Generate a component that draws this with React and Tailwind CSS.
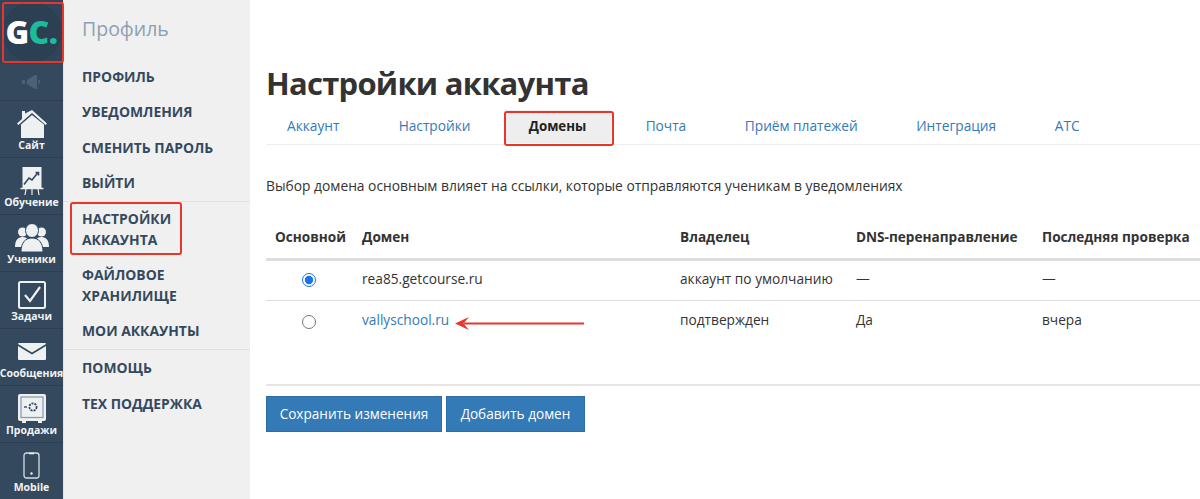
import React from "react";

function Rail({ label, children }) {
  return (
    <div className="h-[57px] border-t border-[#2c3e50] flex flex-col items-center justify-start pt-[6px]">
      <div className="h-[33px] flex items-center justify-center">{children}</div>
      <div className="text-[10.5px] leading-[11px] font-bold text-[#f0f3f4] whitespace-nowrap">{label}</div>
    </div>
  );
}

function Menu({ children }) {
  return <a className="block text-[13.9px] leading-[21px] font-bold text-[#34495e]">{children}</a>;
}

function Tab({ children, cls = "px-[29.3px]" }) {
  return <a className={"h-[33px] flex items-center text-[13.7px] text-[#337ab7] whitespace-nowrap " + cls}>{children}</a>;
}

export default function App() {
  return (
    <div className="flex h-[499px] w-[1200px] overflow-hidden bg-white relative font-['Open_Sans','Noto_Sans',sans-serif]">
      {/* rail */}
      <div className="w-[63px] shrink-0 bg-[#34495e] flex flex-col">
        <div className="h-[64px] bg-[#31455a] flex items-center justify-center">
          <div className="w-[60px] h-[60px] shrink-0 rounded-full bg-[#2d3f52] flex items-center justify-center text-[32px] font-extrabold leading-none tracking-[-0.5px]">
            <span className="text-white">G</span>
            <span className="text-[#1abc9c]">C.</span>
          </div>
        </div>
        <div className="h-[36px] flex items-center justify-center pr-[1px]">
          <svg width="20" height="14" viewBox="0 0 20 14" fill="#4c6076">
            <rect x="1" y="5" width="3" height="4" />
            <path d="M6 5 L14 0 H16 V14 H14 L6 9 Z" />
            <rect x="17.5" y="5" width="1.5" height="4" />
          </svg>
        </div>
        <Rail label="Сайт">
          <svg width="30" height="28" viewBox="0 0 30 28" fill="#edf1f2">
            <path d="M5 1 H8 V3.5 L15 0 L30 13.5 L28.6 15 L15 3 L1.4 15 L0 13.5 L5 9 Z" />
            <path d="M4 14.5 L15 5 L27 14.5 V28 H4 Z" />
          </svg>
        </Rail>
        <Rail label="Обучение">
          <svg width="24" height="28" viewBox="0 0 24 28" fill="none">
            <rect x="2.5" y="0" width="19" height="21" fill="#edf1f2" />
            <path d="M4 17.5 L9 11 L12 13 L18 5.5 M15.5 5.5 H18.5 V8.5" stroke="#34495e" strokeWidth="1.6" />
            <path d="M0.5 21.5 H23.5" stroke="#edf1f2" strokeWidth="1.5" />
            <path d="M6 22 L5 28 M12 22 V28 M18 22 L19 28" stroke="#edf1f2" strokeWidth="1.2" />
          </svg>
        </Rail>
        <Rail label="Ученики">
          <svg width="34" height="28" viewBox="0 0 34 28" fill="#edf1f2">
            <circle cx="7.5" cy="8" r="4.5" />
            <circle cx="26.5" cy="8" r="4.5" />
            <path d="M0 23 C0 15 4 13 8 13 C12 13 14 16 14 23 Z" />
            <path d="M20 23 C20 16 22 13 26 13 C30 13 34 15 34 23 Z" />
            <ellipse cx="17" cy="6.5" rx="6.5" ry="7" stroke="#34495e" strokeWidth="1" />
            <path d="M6 28 C6 18 11 14 17 14 C23 14 28 18 28 28 Z" stroke="#34495e" strokeWidth="1" />
          </svg>
        </Rail>
        <Rail label="Задачи">
          <svg width="28" height="28" viewBox="0 0 28 28" fill="none">
            <rect x="1" y="1" width="26" height="26" rx="1.5" stroke="#edf1f2" strokeWidth="2" />
            <path d="M7 14 L12 20 L22 6" stroke="#edf1f2" strokeWidth="2.2" />
          </svg>
        </Rail>
        <Rail label="Сообщения">
          <svg width="28" height="17" viewBox="0 0 28 17">
            <path d="M0 1 Q0 0 1 0 H27 Q28 0 28 1 L14 9.5 Z" fill="#edf1f2" />
            <path d="M0 3 L14 11.5 L28 3 V16 Q28 17 27 17 H1 Q0 17 0 16 Z" fill="#edf1f2" />
          </svg>
        </Rail>
        <Rail label="Продажи">
          <svg width="28" height="29" viewBox="0 0 28 29" fill="none">
            <rect x="0" y="0" width="28" height="27" rx="2" fill="#edf1f2" />
            <rect x="3" y="3" width="22" height="20.5" stroke="#8597a6" strokeWidth="1.2" />
            <circle cx="15" cy="13" r="3.6" stroke="#34495e" strokeWidth="1.8" strokeDasharray="2 1" />
            <path d="M6 13 H9" stroke="#34495e" strokeWidth="1.4" />
            <path d="M4 27 V29 H8 V27 M20 27 V29 H24 V27" fill="#edf1f2" />
          </svg>
        </Rail>
        <Rail label="Mobile">
          <svg width="17" height="27" viewBox="0 0 17 27" fill="none">
            <rect x="1" y="1" width="15" height="25" rx="2.5" stroke="#d5dce0" strokeWidth="1.3" />
            <path d="M6 1.5 H11" stroke="#edf1f2" strokeWidth="1.5" />
            <circle cx="8.5" cy="21.5" r="1.2" fill="#edf1f2" />
          </svg>
        </Rail>
      </div>

      {/* sidebar */}
      <div className="w-[187px] shrink-0 bg-[#f0f0f0] flex flex-col border-l border-[#e4e4e4]">
        <div className="pl-[18px] pt-[15px] h-[66px] text-[19.5px] leading-[28px] text-[#8ea0b0]">Профиль</div>
        <div className="flex flex-col">
          <div className="pl-[18px] flex flex-col gap-[14.3px] pb-[8px]">
            <Menu>ПРОФИЛЬ</Menu>
            <Menu>УВЕДОМЛЕНИЯ</Menu>
            <Menu>СМЕНИТЬ ПАРОЛЬ</Menu>
            <Menu>ВЫЙТИ</Menu>
          </div>
          <div className="border-t border-[#e3e3e3] pl-[18px] pt-[6px] pb-[8px] flex flex-col gap-[14.3px]">
            <Menu>НАСТРОЙКИ<br />АККАУНТА</Menu>
            <Menu>ФАЙЛОВОЕ<br />ХРАНИЛИЩЕ</Menu>
            <Menu>МОИ АККАУНТЫ</Menu>
          </div>
          <div className="border-t border-[#e0e0e0] pl-[18px] pt-[7px] flex flex-col gap-[14.3px]">
            <Menu>ПОМОЩЬ</Menu>
            <Menu>ТЕХ ПОДДЕРЖКА</Menu>
          </div>
        </div>
      </div>

      {/* main */}
      <div className="flex-1 pl-[16px] min-w-0">
        <h1 className="pt-[62px] text-[31px] leading-[42px] font-bold tracking-[-0.75px] text-[#333]">Настройки аккаунта</h1>
        <div className="mt-[6px] h-[35px] border-b border-[#eee] flex items-start">
          <Tab cls="pl-[21px] pr-[30px]">Аккаунт</Tab>
          <Tab>Настройки</Tab>
          <div className="ml-[4px] mr-[5px] px-[25px] h-[33px] flex items-center bg-[#eee] text-[13.3px] font-bold text-[#222]">Домены</div>
          <Tab>Почта</Tab>
          <Tab>Приём платежей</Tab>
          <Tab>Интеграция</Tab>
          <Tab>АТС</Tab>
        </div>
        <p className="mt-[31px] text-[13.8px] leading-[20px] text-[#333]">Выбор домена основным влияет на ссылки, которые отправляются ученикам в уведомлениях</p>

        <table className="mt-[20px] table-fixed w-[934px] text-[13.7px] text-[#333] border-collapse">
          <thead>
            <tr className="h-[43px] border-b-[3px] border-[#ddd] text-left text-[13.6px]">
              <th className="w-[88px] pl-[9px] font-bold">Основной</th>
              <th className="w-[318px] pl-[8px] font-bold">Домен</th>
              <th className="w-[176px] pl-[8px] font-bold">Владелец</th>
              <th className="w-[186px] pl-[8px] font-bold">DNS-перенаправление</th>
              <th className="pl-[8px] font-bold">Последняя проверка</th>
            </tr>
          </thead>
          <tbody>
            <tr className="h-[41px] border-b border-[#ddd]">
              <td className="text-center pr-[2px] pb-[2px]"><input type="radio" readOnly checked className="w-[14px] h-[14px] align-middle accent-[#1a73e8]" /></td>
              <td className="pl-[8px] pb-[2px]">rea85.getcourse.ru</td>
              <td className="pl-[8px] pb-[2px]">аккаунт по умолчанию</td>
              <td className="pl-[8px] pb-[2px]">—</td>
              <td className="pl-[8px] pb-[2px]">—</td>
            </tr>
            <tr className="h-[41px]">
              <td className="text-center pr-[2px]"><input type="radio" readOnly className="w-[14px] h-[14px] align-middle" /></td>
              <td className="pl-[8px] text-[#337ab7]">vallyschool.ru</td>
              <td className="pl-[8px]">подтвержден</td>
              <td className="pl-[8px]">Да</td>
              <td className="pl-[8px]">вчера</td>
            </tr>
          </tbody>
        </table>

        <div className="mt-[43px] border-t-2 border-[#e5e5e5] pt-[10px] flex gap-[4px]">
          <button className="h-[36px] w-[176px] bg-[#337ab7] border border-[#2e6da4] text-white text-[13.6px]">Сохранить изменения</button>
          <button className="h-[36px] w-[139px] bg-[#337ab7] border border-[#2e6da4] text-white text-[13.6px]">Добавить домен</button>
        </div>
      </div>

      {/* annotations */}
      <div className="absolute left-[2px] top-[2px] w-[62px] h-[61px] border-[2px] border-[#e9362b] rounded-[3px]" />
      <div className="absolute left-[70px] top-[202px] w-[112px] h-[53px] border-[2px] border-[#e9362b] rounded-[3px]" />
      <div className="absolute left-[504px] top-[111px] w-[110px] h-[35px] border-[2px] border-[#e9362b] rounded-[3px]" />
      <svg className="absolute left-[454px] top-[314px]" width="132" height="18" viewBox="0 0 132 18">
        <path d="M130 9.5 H10" stroke="#e9362b" strokeWidth="2" />
        <path d="M1 9.5 L15 3 L9.5 9.5 L15 16 Z" fill="#e9362b" />
      </svg>
    </div>
  );
}
